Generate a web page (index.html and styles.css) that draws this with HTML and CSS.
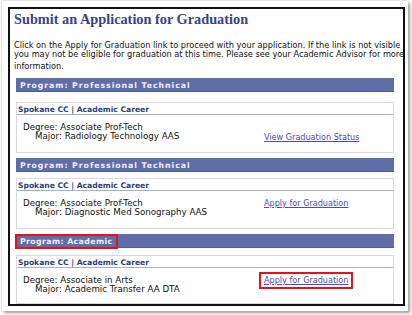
FILE: index.html
```html
<!DOCTYPE html>
<html>
<head>
<meta charset="utf-8">
<link rel="stylesheet" href="styles.css">
</head>
<body>
<div class="paper">
  <div class="win">
    <h1 class="title">Submit an Application for Graduation</h1>
    <div class="intro">
      <div class="line">Click on the Apply for Graduation link to proceed with your application. If the link is not visible</div>
      <div class="line">you may not be eligible for graduation at this time. Please see your Academic Advisor for more</div>
      <div class="line last">information.</div>
    </div>

    <div class="program p1">
      <div class="bar"><span class="bar-label">Program: Professional Technical</span></div>
      <div class="card">
        <div class="card-head">Spokane CC | Academic Career</div>
        <div class="card-body">
          <div class="degree">
            <div>Degree: Associate Prof-Tech</div>
            <div class="major">Major: Radiology Technology AAS</div>
          </div>
          <div class="action low"><a href="#" class="link">View Graduation Status</a></div>
        </div>
      </div>
    </div>

    <div class="program p2">
      <div class="bar"><span class="bar-label">Program: Professional Technical</span></div>
      <div class="card">
        <div class="card-head">Spokane CC | Academic Career</div>
        <div class="card-body">
          <div class="degree">
            <div>Degree: Associate Prof-Tech</div>
            <div class="major">Major: Diagnostic Med Sonography AAS</div>
          </div>
          <div class="action"><a href="#" class="link">Apply for Graduation</a></div>
        </div>
      </div>
    </div>

    <div class="program p3">
      <div class="bar"><span class="bar-label boxed">Program: Academic</span></div>
      <div class="card">
        <div class="card-head">Spokane CC | Academic Career</div>
        <div class="card-body">
          <div class="degree">
            <div>Degree: Associate in Arts</div>
            <div class="major">Major: Academic Transfer AA DTA</div>
          </div>
          <div class="action"><a href="#" class="link boxed-link">Apply for Graduation</a></div>
        </div>
      </div>
    </div>
  </div>
</div>
</body>
</html>
```

FILE: styles.css
```css
html, body {
  margin: 0;
  padding: 0;
  background: #ffffff;
}
body {
  width: 412px;
  height: 315px;
  overflow: hidden;
  font-family: "DejaVu Sans", Verdana, sans-serif;
}
.paper {
  margin: 1px 4px 0 2px;
  padding: 6px 3px 4px 6px;
  height: 310px;
  box-sizing: border-box;
  background: #fff;
  box-shadow: 0 0 2px #b8b8b8, 2px 2px 3px #9a9a9a;
}
.win {
  border: 2px solid #111;
  height: 299px;
  box-sizing: border-box;
  overflow: hidden;
  padding: 0 9px 0 6px;
  display: flex;
  flex-direction: column;
}
.title {
  margin: 3px 0 0 -2px;
  font-family: "Liberation Serif", "Times New Roman", serif;
  font-weight: bold;
  font-size: 14.3px;
  line-height: 14px;
  color: #34448a;
  height: 14px;
  white-space: nowrap;
}
.intro {
  margin: 15px -20px 0 -2px;
  font-size: 8.2px;
  line-height: 8.7px;
  color: #111;
  white-space: nowrap;
  overflow: hidden;
}
.intro .last {
  margin-top: 4px;
}
.program {
  display: flex;
  flex-direction: column;
  flex-shrink: 0;
}
.bar {
  margin-top: 5px;
  height: 14px;
  background: #5f6ea9;
  display: flex;
  align-items: stretch;
  box-shadow: inset 0 -1px 0 #4f5d96;
}
.p1 .bar { margin-top: 7px; }
.bar-label {
  color: #f0f0f8;
  font-weight: bold;
  font-size: 7.8px;
  letter-spacing: 0.95px;
  padding: 0 3px 0 4px;
  display: flex;
  align-items: center;
}
.bar-label.boxed {
  border: 2px solid #e8101a;
  margin: 0 0 -1px -1px;
  padding: 0 3px 0 3px;
  letter-spacing: 0.4px;
}
.card {
  margin-top: 6px;
  border: 1px solid #d4d9e4;
  height: 51px;
  box-sizing: border-box;
  display: flex;
  flex-direction: column;
  background: #fff;
}
.p1 .card { margin-top: 10px; }
.p3 .card { margin-top: 7px; height: 49px; }
.card-head {
  font-size: 7.6px;
  font-weight: bold;
  color: #2e3f7b;
  padding: 2px 0 0 1px;
  height: 12px;
  box-sizing: border-box;
  border-bottom: 1px solid #9fb0cc;
  line-height: 9px;
}
.card-body {
  display: flex;
  font-size: 8.7px;
  color: #111;
  line-height: 9px;
  padding-top: 8px;
}
.degree {
  padding-left: 6px;
  width: 241px;
  flex-shrink: 0;
}
.major {
  padding-left: 12px;
}
.action.low { padding-top: 10px; }
.link {
  color: #4b4bc0;
  text-decoration: underline;
  font-size: 8.1px;
  white-space: nowrap;
}
.boxed-link {
  display: inline-block;
  border: 2px solid #e8101a;
  padding: 2px 3px;
  margin: -4px 0 0 -5px;
  line-height: 9px;
}
```
